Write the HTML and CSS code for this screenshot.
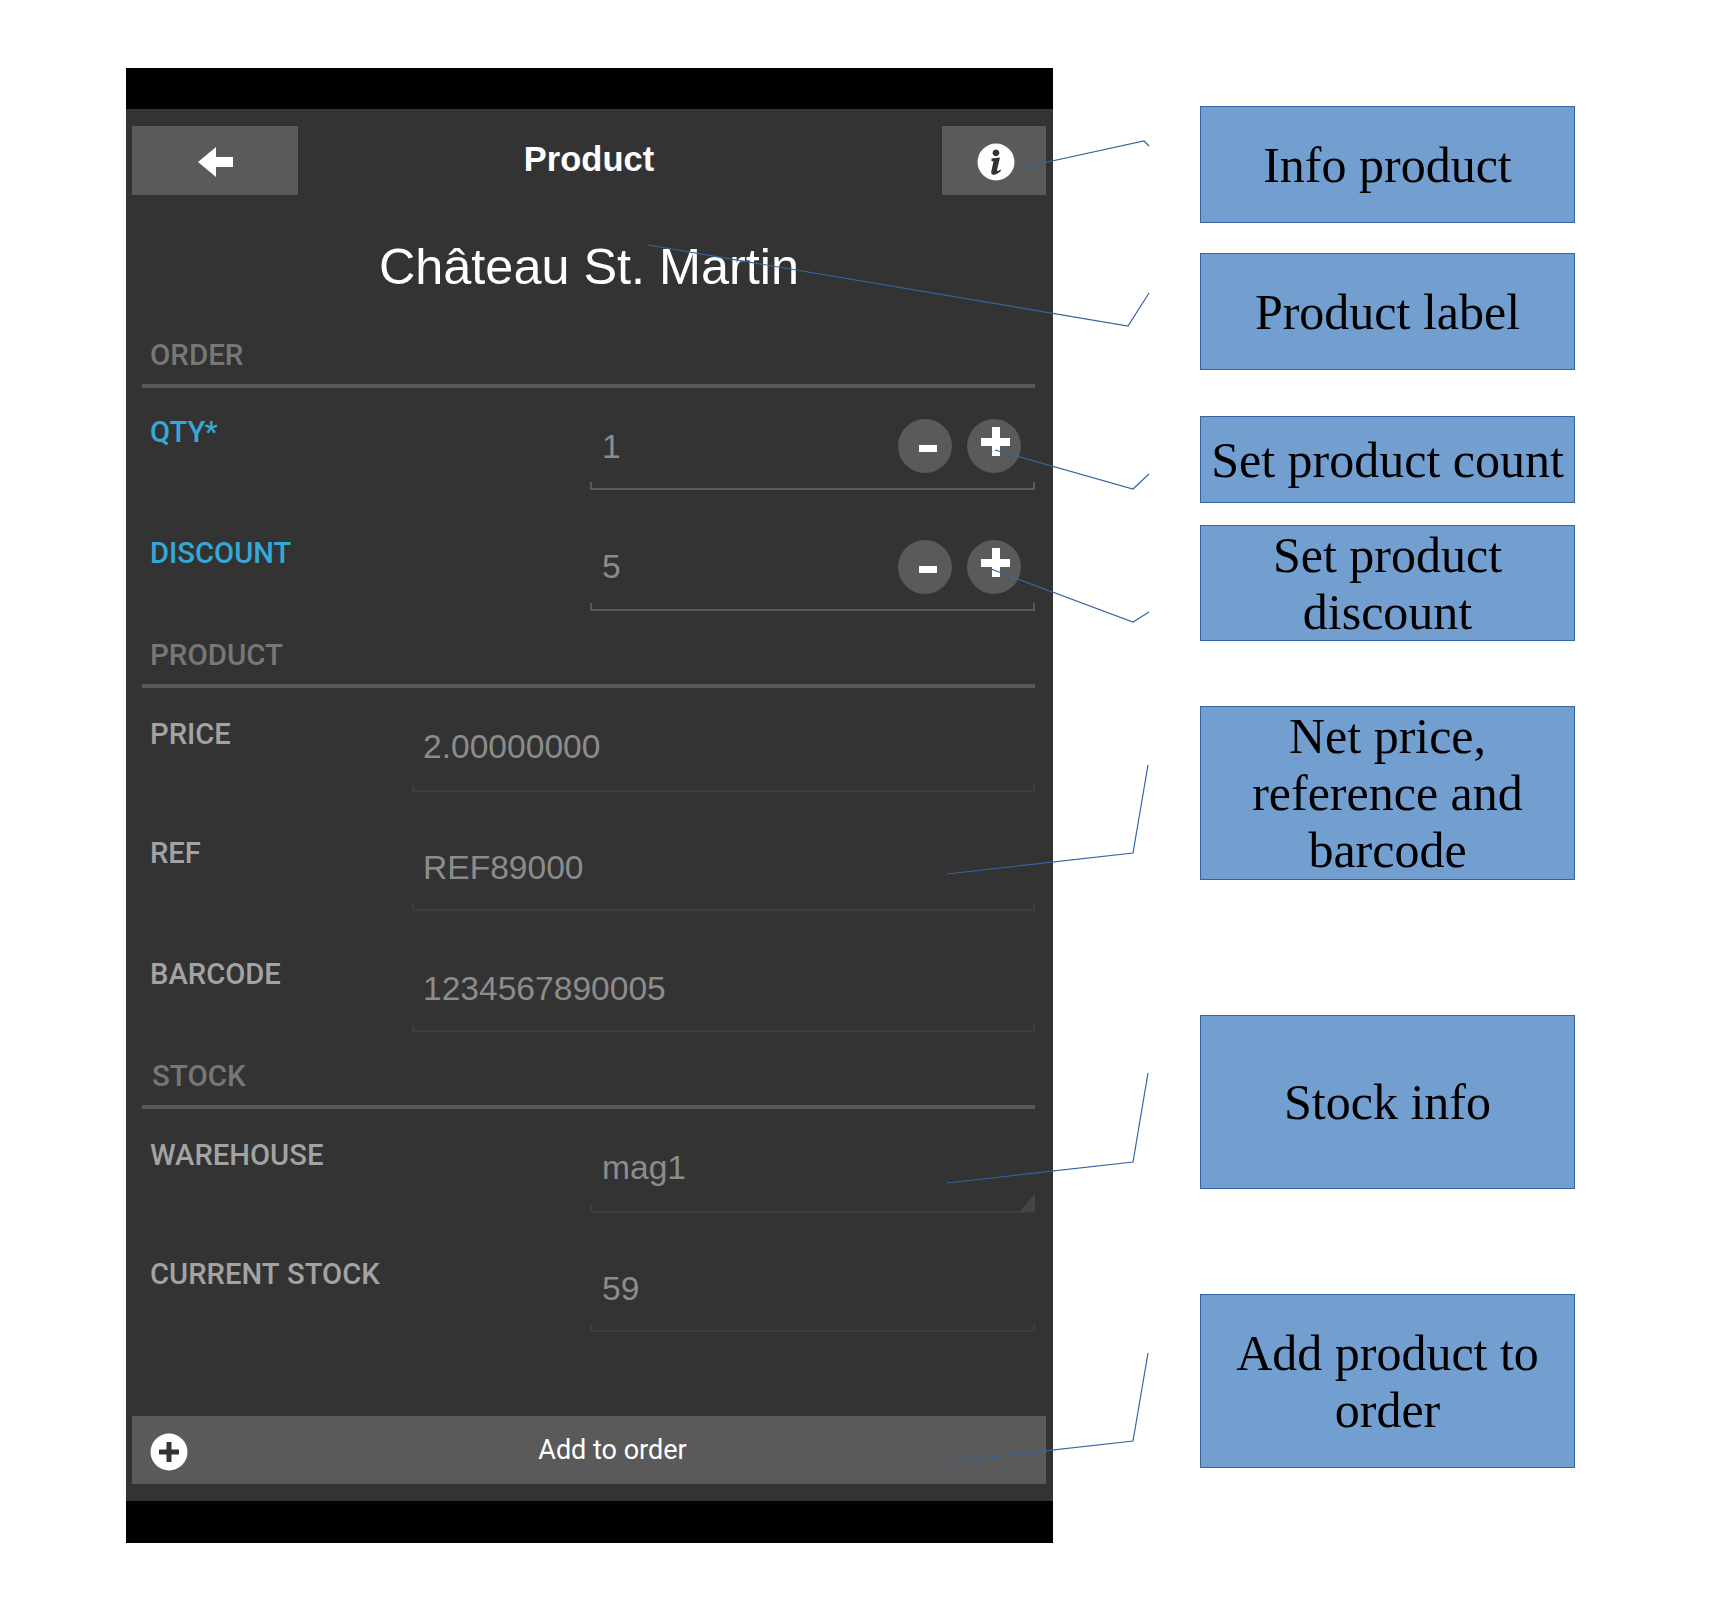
FILE: index.html
```html
<!DOCTYPE html>
<html lang="en">
<head>
    <meta charset="UTF-8">
    <title>Product</title>
    <link rel="stylesheet" href="styles.css">
</head>
<body>
    <div class="page">
        <div class="phone">
            <div class="black-bar-top"></div>
            <div class="screen">
                <div class="top-bar">
                    <div class="top-btn back-btn">
                        <svg width="35" height="30" viewBox="0 0 35 30"><path d="M0 15 L18 0 L18 10 L35 10 L35 20 L18 20 L18 30 Z" fill="#fff"/></svg>
                    </div>
                    <div class="top-title">Product</div>
                    <div class="top-btn info-btn">
                        <svg width="38" height="38" viewBox="0 0 38 38"><circle cx="19" cy="19" r="18.5" fill="#fff"/><path d="M19 6.5 a3.4 3.4 0 1 1 -0.1 0 Z M14.5 15.5 L23 14.5 L20 27 Q20 29 23.5 26.5 L24 28 Q19 32.5 15.5 31.5 Q13.5 30.5 14.5 27.5 L16.5 18.5 L14.5 18 Z" fill="#333"/></svg>
                    </div>
                </div>

                <div class="product-name">Château St. Martin</div>

                <div class="content">
                    <div class="section-title">ORDER</div>
                    <div class="row row-half">
                        <div class="row-label label-blue">QTY*</div>
                        <div class="field">
                            <div class="field-value">
                                <span>1</span>
                                <div class="step-btns">
                                    <div class="step-btn"><span class="minus"></span></div>
                                    <div class="step-btn"><span class="plus"></span></div>
                                </div>
                            </div>
                            <div class="tick-line"></div>
                        </div>
                    </div>
                    <div class="row row-half">
                        <div class="row-label label-blue">DISCOUNT</div>
                        <div class="field">
                            <div class="field-value">
                                <span class="nudge-up">5</span>
                                <div class="step-btns">
                                    <div class="step-btn"><span class="minus"></span></div>
                                    <div class="step-btn"><span class="plus"></span></div>
                                </div>
                            </div>
                            <div class="tick-line"></div>
                        </div>
                    </div>

                    <div class="section-title">PRODUCT</div>
                    <div class="row row-wide row-lead">
                        <div class="row-label">PRICE</div>
                        <div class="field">
                            <div class="field-value"><span>2.00000000</span></div>
                            <div class="tick-line disabled"></div>
                        </div>
                    </div>
                    <div class="row row-wide">
                        <div class="row-label">REF</div>
                        <div class="field">
                            <div class="field-value"><span>REF89000</span></div>
                            <div class="tick-line disabled"></div>
                        </div>
                    </div>
                    <div class="row row-wide">
                        <div class="row-label">BARCODE</div>
                        <div class="field">
                            <div class="field-value"><span>1234567890005</span></div>
                            <div class="tick-line disabled"></div>
                        </div>
                    </div>

                    <div class="section-title section-stock">STOCK</div>
                    <div class="row row-half row-lead">
                        <div class="row-label">WAREHOUSE</div>
                        <div class="field field-select">
                            <div class="field-value"><span>mag1</span></div>
                            <div class="tick-line disabled"></div>
                        </div>
                    </div>
                    <div class="row row-half">
                        <div class="row-label">CURRENT STOCK</div>
                        <div class="field">
                            <div class="field-value"><span>59</span></div>
                            <div class="tick-line disabled"></div>
                        </div>
                    </div>
                </div>

                <div class="add-btn">
                    <svg class="add-icon" width="38" height="38" viewBox="0 0 38 38"><circle cx="19" cy="19" r="18.5" fill="#fff"/><path d="M16.5 9 H21.5 V16.5 H29 V21.5 H21.5 V29 H16.5 V21.5 H9 V16.5 H16.5 Z" fill="#333"/></svg>
                    <span class="add-text">Add to order</span>
                </div>
            </div>
            <div class="black-bar-bottom"></div>
        </div>

        <div class="callouts">
            <div class="callout c-info">Info product</div>
            <div class="callout c-label">Product label</div>
            <div class="callout c-count">Set product count</div>
            <div class="callout c-discount">Set product discount</div>
            <div class="callout c-net">Net price, reference and barcode</div>
            <div class="callout c-stock">Stock info</div>
            <div class="callout c-add">Add product to order</div>
        </div>

        <!-- leader lines, drawn over the screenshot -->
        <svg class="leaders" width="1714" height="1608" viewBox="0 0 1714 1608">
            <polyline points="1020,168 1144,141 1149,146"/>
            <polyline points="648,245 1128,326 1149,293"/>
            <polyline points="995,450 1133,489 1149,474"/>
            <polyline points="991,569 1133,622 1149,612"/>
            <polyline points="947,874 1133,853 1148,765"/>
            <polyline points="947,1183 1133,1162 1148,1073"/>
            <polyline points="947,1462 1133,1441 1148,1353"/>
        </svg>
    </div>
</body>
</html>
```
FILE: styles.css
```css
body {
    margin: 0;
    background: #fff;
    font-family: "Liberation Sans", Arial, sans-serif;
}
.page {
    position: relative;
    display: flex;
    width: 1714px;
    height: 1608px;
    box-sizing: border-box;
    padding: 68px 0 0 126px;
}
.phone {
    display: flex;
    flex-direction: column;
    width: 927px;
    height: 1475px;
}
.black-bar-top { height: 41px; background: #000; }
.black-bar-bottom { height: 42px; background: #000; }
.screen {
    flex: 1;
    display: flex;
    flex-direction: column;
    background: #333;
    padding: 17px 7px 17px 6px;
}
.top-bar {
    display: grid;
    grid-template-columns: 166px 1fr 166px;
    align-items: center;
    height: 69px;
}
.top-btn {
    display: flex;
    align-items: center;
    justify-content: center;
    height: 69px;
    padding-top: 3px;
    box-sizing: border-box;
    background: #5a5a5a;
}
.back-btn { width: 166px; }
.info-btn { width: 104px; padding-left: 4px; justify-self: end; }
.top-title {
    color: #fff;
    font-size: 34.5px;
    font-weight: bold;
    text-align: center;
    margin-bottom: 3px;
}
.product-name {
    margin-top: 42px;
    margin-bottom: 38px;
    line-height: 60px;
    text-align: center;
    color: #fff;
    font-size: 50.4px;
}
.content { padding: 0 11px 0 10px; }
.section-title {
    height: 49px;
    line-height: 40px;
    padding-left: 8px;
    color: #777;
    font-family: Roboto, sans-serif;
    font-weight: 500;
    font-size: 29.5px;
    border-bottom: 4px solid #5a5a5a;
    margin-top: 24px;
}
.section-title:first-child { margin-top: 0; }
.section-stock { padding-left: 10px; }
.row {
    display: grid;
    height: 102px;
    margin-bottom: 19px;
}
.row:last-child { margin-bottom: 0; }
.row-half { grid-template-columns: 448px 1fr; }
.row-wide { grid-template-columns: 270px 1fr; }
.row-label {
    padding: 24px 0 0 8px;
    line-height: 40px;
    color: #a3a3a3;
    font-family: Roboto, sans-serif;
    font-weight: 500;
    font-size: 29.2px;
    word-spacing: 1px;
}
.label-blue { color: #35a8d6; }
/* first row of a block sits a little lower than the others */
.row-lead { height: 104px; margin-bottom: 17px; }
.row-lead .row-label { padding-top: 26px; }
.row-lead .field-value { margin-bottom: 11px; }
.field {
    position: relative;
    display: flex;
    flex-direction: column;
    padding-top: 31px;
}
.field-value {
    display: flex;
    align-items: center;
    justify-content: space-between;
    height: 54px;
    margin-bottom: 9px;
    padding: 0 14px 0 12px;
    color: #8c8c8c;
    font-size: 33.6px;
}
.field-value > span { padding-top: 2px; }
.row-wide .field-value { padding-left: 11px; }
.nudge-up { margin-bottom: 3px; }
.tick-line {
    height: 6px;
    border: 2px solid #5a5a5a;
    border-top: none;
}
.tick-line.disabled { border-color: #3e3e3e; }
.field-select::after {
    content: "";
    position: absolute;
    right: 0;
    bottom: 2px;
    border-style: solid;
    border-width: 0 0 17px 15px;
    border-color: transparent transparent #454545 transparent;
}
.step-btns { display: flex; gap: 15px; }
.step-btn {
    position: relative;
    width: 54px;
    height: 54px;
    border-radius: 50%;
    background: #5a5a5a;
}
.minus {
    position: absolute;
    left: 21px;
    top: 26px;
    width: 18px;
    height: 7px;
    background: #fff;
}
.plus {
    position: absolute;
    left: 14px;
    top: 8px;
    width: 29px;
    height: 29px;
    background:
        linear-gradient(#fff, #fff) center / 8px 100% no-repeat,
        linear-gradient(#fff, #fff) center / 100% 8px no-repeat;
}
.add-btn {
    position: relative;
    display: flex;
    align-items: center;
    justify-content: center;
    margin-top: auto;
    height: 68px;
    background: #5a5a5a;
}
.add-icon {
    position: absolute;
    left: 18px;
    top: 17px;
}
.add-text {
    margin-left: 47px;
    color: #fff;
    font-family: Roboto, sans-serif;
    font-size: 27px;
}
.callouts {
    display: flex;
    flex-direction: column;
    width: 375px;
    margin-left: 147px;
    padding-top: 38px;
}
.callout {
    display: flex;
    align-items: center;
    justify-content: center;
    box-sizing: border-box;
    text-align: center;
    background: #729fcf;
    border: 1px solid #3465a4;
    color: #000;
    font-family: "Liberation Serif", "Times New Roman", serif;
    font-size: 50px;
    line-height: 57px;
    padding-top: 1px;
}
.c-info { height: 117px; }
.c-label { height: 117px; margin-top: 30px; }
.c-count { height: 87px; margin-top: 46px; }
.c-discount { height: 116px; margin-top: 22px; padding-left: 30px; padding-right: 30px; }
.c-net { height: 174px; margin-top: 65px; padding-left: 20px; padding-right: 20px; }
.c-stock { height: 174px; margin-top: 135px; }
.c-add { height: 174px; margin-top: 105px; padding-left: 20px; padding-right: 20px; }
.leaders {
    position: absolute;
    left: 0;
    top: 0;
    pointer-events: none;
}
.leaders polyline {
    fill: none;
    stroke: #3465a4;
    stroke-width: 1.2;
}
```
